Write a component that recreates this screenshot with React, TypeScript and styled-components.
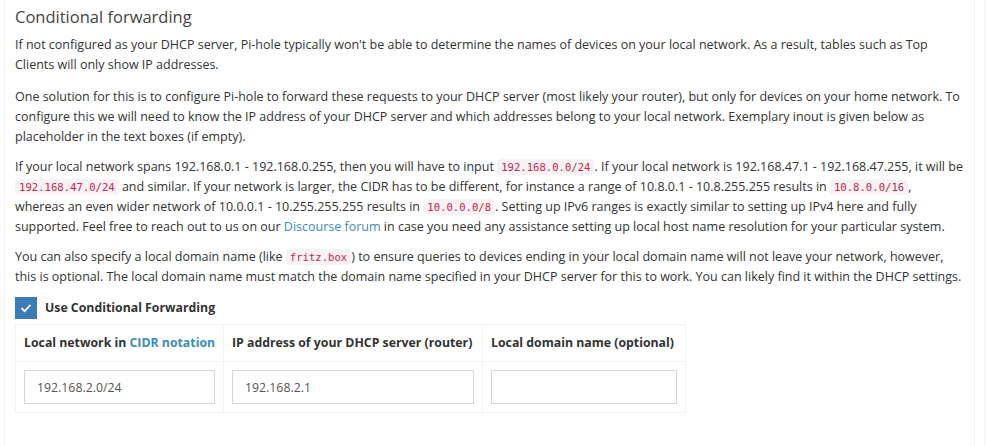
import React from "react";
import styled, { createGlobalStyle } from "styled-components";

const Global = createGlobalStyle`
  html, body { margin: 0; padding: 0; background: #fff; }
  body { font-family: "Open Sans", "Liberation Sans", sans-serif; color: #333; }
  * { box-sizing: border-box; }
`;

const Page = styled.div`
  width: 986px;
  height: 446px;
  background: #fff;
  padding: 0 10px 0 4px;
  border-right: 1px solid #f0f0f0;
  overflow: hidden;
`;

const Box = styled.section`
  background: #fff;
  border-left: 1px solid #f3f3f3;
  border-right: 1px solid #f3f3f3;
  height: 100%;
  padding: 4px 10px 0 10px;
`;

const Title = styled.h3`
  margin: 0 0 5px;
  font-size: 16.5px;
  font-weight: 400;
  line-height: 26px;
  color: #444;
`;

const Para = styled.p<{ $gap?: number }>`
  margin: 0 0 ${(p) => p.$gap ?? 10}px;
  font-size: 12.5px;
  line-height: 20px;
  color: #333;
  white-space: nowrap;
`;

const Code = styled.code`
  font-family: "DejaVu Sans Mono", "Liberation Mono", monospace;
  font-size: 10.6px;
  color: #c7254e;
  background: #f9f2f4;
  padding: 2px 4px;
  border-radius: 4px;
`;

const Link = styled.a`
  color: #3c8dbc;
  text-decoration: none;
`;

const CheckRow = styled.label`
  display: flex;
  align-items: center;
  gap: 8px;
  margin: 0 0 5px;
  font-size: 12.3px;
  font-weight: 700;
  line-height: 22px;
  color: #333;
`;

const CheckBox = styled.span`
  width: 22px;
  height: 22px;
  background: #3a7cb8;
  display: flex;
  align-items: center;
  justify-content: center;
`;

const Table = styled.table`
  border-collapse: collapse;
  table-layout: fixed;
  width: 670px;
  border: 1px solid #f4f4f4;
`;

const Col = styled.col<{ $w: number }>`
  width: ${(p) => p.$w}px;
`;

const Th = styled.th`
  border: 1px solid #f4f4f4;
  padding: 8px 8px;
  font-size: 12.3px;
  font-weight: 700;
  text-align: left;
  line-height: 20px;
  color: #333;
  white-space: nowrap;
`;

const Td = styled.td`
  border: 1px solid #f4f4f4;
  padding: 8px 8px;
`;

const Input = styled.input`
  display: block;
  width: 100%;
  height: 34px;
  border: 1px solid #d2d6de;
  padding: 6px 12px;
  font-family: "Open Sans", "Liberation Sans", sans-serif;
  font-size: 12.3px;
  color: #555;
  outline: none;
`;

export default function App() {
  return (
    <Page>
      <Global />
      <Box>
        <Title>Conditional forwarding</Title>
        <Para $gap={12}>
          If not configured as your DHCP server, Pi-hole typically won't be able to determine the names of devices on your local network. As a result, tables such as Top
          <br />
          Clients will only show IP addresses.
        </Para>
        <Para>
          One solution for this is to configure Pi-hole to forward these requests to your DHCP server (most likely your router), but only for devices on your home network. To
          <br />
          configure this we will need to know the IP address of your DHCP server and which addresses belong to your local network. Exemplary inout is given below as
          <br />
          placeholder in the text boxes (if empty).
        </Para>
        <Para>
          If your local network spans 192.168.0.1 - 192.168.0.255, then you will have to input <Code>192.168.0.0/24</Code>. If your local network is 192.168.47.1 - 192.168.47.255, it will be
          <br />
          <Code>192.168.47.0/24</Code> and similar. If your network is larger, the CIDR has to be different, for instance a range of 10.8.0.1 - 10.8.255.255 results in <Code>10.8.0.0/16</Code>,
          <br />
          whereas an even wider network of 10.0.0.1 - 10.255.255.255 results in <Code>10.0.0.0/8</Code>. Setting up IPv6 ranges is exactly similar to setting up IPv4 here and fully
          <br />
          supported. Feel free to reach out to us on our <Link href="#">Discourse forum</Link> in case you need any assistance setting up local host name resolution for your particular system.
        </Para>
        <Para>
          You can also specify a local domain name (like <Code>fritz.box</Code>) to ensure queries to devices ending in your local domain name will not leave your network, however,
          <br />
          this is optional. The local domain name must match the domain name specified in your DHCP server for this to work. You can likely find it within the DHCP settings.
        </Para>
        <CheckRow>
          <CheckBox>
            <svg width="14" height="14" viewBox="0 0 14 14">
              <path d="M2.5 7.2 L5.6 10.2 L11.5 3.8" fill="none" stroke="#fff" strokeWidth="1.8" />
            </svg>
          </CheckBox>
          Use Conditional Forwarding
        </CheckRow>
        <Table>
          <colgroup>
            <Col $w={208} />
            <Col $w={259} />
            <Col $w={203} />
          </colgroup>
          <thead>
            <tr>
              <Th>Local network in <Link href="#">CIDR notation</Link></Th>
              <Th>IP address of your DHCP server (router)</Th>
              <Th>Local domain name (optional)</Th>
            </tr>
          </thead>
          <tbody>
            <tr>
              <Td><Input defaultValue="192.168.2.0/24" /></Td>
              <Td><Input defaultValue="192.168.2.1" /></Td>
              <Td><Input defaultValue="" /></Td>
            </tr>
          </tbody>
        </Table>
      </Box>
    </Page>
  );
}
